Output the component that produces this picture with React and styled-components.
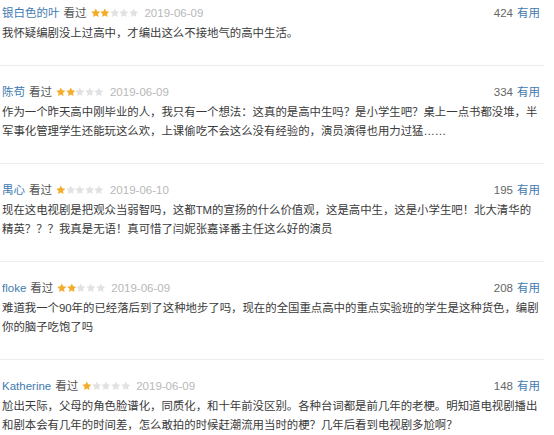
import React from 'react'
import styled, { createGlobalStyle } from 'styled-components'

const GlobalStyle = createGlobalStyle`
  body {
    margin: 0;
    background: #fff;
    font-family: "Liberation Sans", "Noto Sans CJK SC", sans-serif;
  }
`

const List = styled.div`
  width: 544px;
`

const Item = styled.div`
  padding: ${(p) => (p.first ? '5px' : '18px')} 4px 22px 2px;
  border-bottom: 1px solid #ececec;
`

const Header = styled.div`
  display: flex;
  align-items: center;
  height: 16px;
  font-size: 11.5px;
  line-height: 16px;
`

const Name = styled.span`
  color: #3f7bb0;
  margin-right: 4px;
`

const Watched = styled.span`
  color: #555;
  margin-right: 4px;
`

const Stars = styled.span`
  display: inline-flex;
  margin-right: 6px;
`

const Date = styled.span`
  color: #b8b8b8;
`

const Votes = styled.span`
  margin-left: auto;
  color: #666;
`

const Useful = styled.span`
  color: #3f7bb0;
  margin-left: 4px;
`

const Content = styled.p`
  margin: 3px 0 0;
  font-size: 11.4px;
  line-height: 19px;
  color: #3a3a3a;
  white-space: pre-line;
`

const Star = ({ on }) => (
  <svg width="9.6" height="10" viewBox="0 0 24 24">
    <path
      d="M12 0.8l3.4 7.1 7.8 1-5.7 5.4 1.4 7.7L12 18.3l-6.9 3.7 1.4-7.7L.8 8.9l7.8-1z"
      fill={on ? '#f3ad2a' : '#e2e2e2'}
    />
  </svg>
)

const reviews = [
  {
    name: '银白色的叶',
    rating: 2,
    date: '2019-06-09',
    votes: 424,
    text: '我怀疑编剧没上过高中，才编出这么不接地气的高中生活。',
  },
  {
    name: '陈苟',
    rating: 2,
    date: '2019-06-09',
    votes: 334,
    text:
      '作为一个昨天高中刚毕业的人，我只有一个想法：这真的是高中生吗？是小学生吧？桌上一点书都没堆，半\n军事化管理学生还能玩这么欢，上课偷吃不会这么没有经验的，演员演得也用力过猛……',
  },
  {
    name: '禺心',
    rating: 1,
    date: '2019-06-10',
    votes: 195,
    text:
      '现在这电视剧是把观众当弱智吗，这都TM的宣扬的什么价值观，这是高中生，这是小学生吧！北大清华的\n精英？？？我真是无语！真可惜了闫妮张嘉译番主任这么好的演员',
  },
  {
    name: 'floke',
    rating: 2,
    date: '2019-06-09',
    votes: 208,
    text:
      '难道我一个90年的已经落后到了这种地步了吗，现在的全国重点高中的重点实验班的学生是这种货色，编剧\n你的脑子吃饱了吗',
  },
  {
    name: 'Katherine',
    rating: 1,
    date: '2019-06-09',
    votes: 148,
    text:
      '尬出天际，父母的角色脸谱化，同质化，和十年前没区别。各种台词都是前几年的老梗。明知道电视剧播出\n和剧本会有几年的时间差，怎么敢拍的时候赶潮流用当时的梗？几年后看到电视剧多尬啊？',
  },
]

export default function App() {
  return (
    <>
      <GlobalStyle />
      <List>
        {reviews.map((r, i) => (
          <Item key={i} first={i === 0}>
            <Header>
              <Name>{r.name}</Name>
              <Watched>看过</Watched>
              <Stars>
                {[0, 1, 2, 3, 4].map((n) => (
                  <Star key={n} on={n < r.rating} />
                ))}
              </Stars>
              <Date>{r.date}</Date>
              <Votes>
                {r.votes}
                <Useful>有用</Useful>
              </Votes>
            </Header>
            <Content>{r.text}</Content>
          </Item>
        ))}
      </List>
    </>
  )
}
